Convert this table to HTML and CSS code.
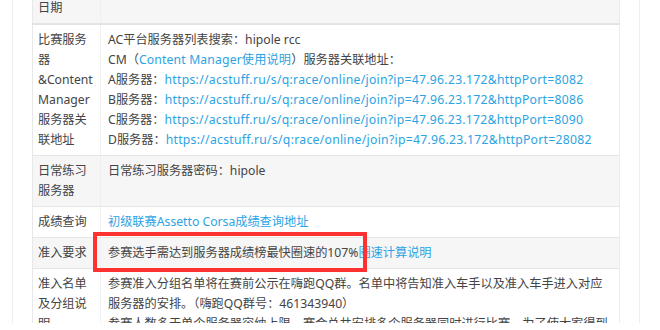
FILE: index.html
```html
<!DOCTYPE html>
<html lang="zh">
<head>
<meta charset="utf-8">
<link rel="stylesheet" href="styles.css">
</head>
<body>
<div class="frame">
  <div class="sheet">
    <table class="info">
      <colgroup><col class="c1"><col class="c2"></colgroup>
      <tr class="alt first"><td class="lbl">日期</td><td></td></tr>
      <tr>
        <td class="lbl">比赛服务器&amp;Content Manager服务器关联地址</td>
        <td class="val nw">AC平台服务器列表搜索：hipole rcc<br>CM（<a class="lat">Content Manager使用说明</a>）服务器关联地址：<br>A服务器：<a class="url">https://acstuff.ru/s/q:race/online/join?ip=47.96.23.172&amp;httpPort=8082</a><br>B服务器：<a class="url">https://acstuff.ru/s/q:race/online/join?ip=47.96.23.172&amp;httpPort=8086</a><br>C服务器：<a class="url">https://acstuff.ru/s/q:race/online/join?ip=47.96.23.172&amp;httpPort=8090</a><br>D服务器：<a class="url">https://acstuff.ru/s/q:race/online/join?ip=47.96.23.172&amp;httpPort=28082</a></td>
      </tr>
      <tr class="alt"><td class="lbl">日常练习服务器</td><td class="val">日常练习服务器密码：hipole</td></tr>
      <tr><td class="lbl">成绩查询</td><td class="val"><a>初级联赛Assetto Corsa成绩查询地址</a></td></tr>
      <tr class="alt"><td class="lbl">准入要求</td><td class="val mark-cell">参赛选手需达到服务器成绩榜最快圈速的107%<a>圈速计算说明</a><span class="mark"></span></td></tr>
      <tr><td class="lbl">准入名单及分组说明</td><td class="val nw">参赛准入分组名单将在赛前公示在嗨跑QQ群。名单中将告知准入车手以及准入车手进入对应<br>服务器的安排。（嗨跑QQ群号：461343940）<br>参赛人数多于单个服务器容纳上限，赛会总共安排多个服务器同时进行比赛，为了使大家得到</td></tr>
    </table>
  </div>
</div>
</body>
</html>
```

FILE: styles.css
```css
html, body {
  margin: 0;
  padding: 0;
  background: #fff;
  overflow: hidden;
}
body {
  font-family: "Noto Sans", "Noto Sans CJK SC", sans-serif;
  font-size: 12.2px;
  line-height: 20px;
  color: #444;
}
.frame {
  margin-left: 12px;
  width: 626px;
  height: 330px;
  border-left: 1px solid #eeeeee;
  border-right: 1px solid #eeeeee;
}
.sheet {
  padding-left: 19px;
  width: 588px;
}
.info {
  width: 588px;
  table-layout: fixed;
  border-collapse: collapse;
  margin-top: -7px;
  border-left: 1px solid #e8e8e8;
  border-right: 1px solid #ececec;
}
.c1 { width: 68px; }
.info td {
  vertical-align: top;
  padding: 5px 6px 5px 5px;
  border-bottom: 1px solid #e6e6e6;
}
.info td + td {
  border-left: 1px solid #f0f0f0;
  padding-left: 7px;
}
.info tr.first td {
  border-bottom: 2px solid #e4e4e4;
  height: 20px;
}
.alt td { background: #f6f6f6; }
.nw { white-space: nowrap; }
a { color: #2ba3e4; text-decoration: none; }
.url { letter-spacing: 0.28px; }
.lat { letter-spacing: 0.15px; }
.mark-cell { position: relative; }
.mark {
  position: absolute;
  left: -8px;
  top: -6px;
  width: 266px;
  height: 32px;
  border: 4px solid #ff3232;
}
```
